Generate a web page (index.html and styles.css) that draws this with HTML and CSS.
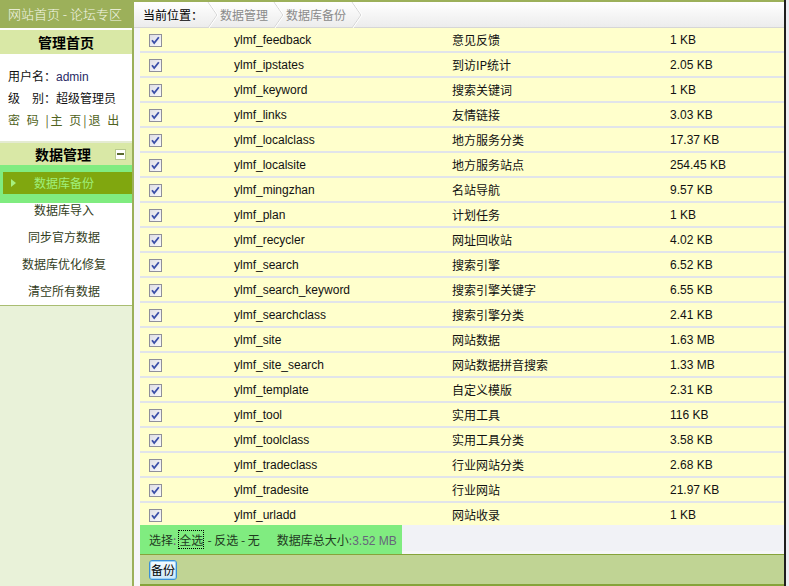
FILE: index.html
```html
<!DOCTYPE html>
<html>
<head>
<meta charset="utf-8">
<link rel="stylesheet" href="styles.css">
</head>
<body>
<div class="frame">
  <aside class="sidebar">
    <div class="logo-bar">网站首页 - 论坛专区</div>
    <div class="side-body">
      <div class="side-top">
        <div class="side-title">管理首页</div>
        <div class="user-info">
          <div class="line">用户名：<span class="uname">admin</span></div>
          <div class="line">级&emsp;别：超级管理员</div>
          <div class="line links">密&nbsp;码&nbsp;|主&nbsp;页|退&nbsp;出</div>
        </div>
        <div class="menu-head">
          <span class="menu-title">数据管理</span>
          <span class="toggle"><span class="minus"></span></span>
        </div>
        <ul class="menu">
          <li class="menu-item active"><span class="active-inner"><span class="tri"></span><span class="label">数据库备份</span></span></li>
          <li class="menu-item">数据库导入</li>
          <li class="menu-item">同步官方数据</li>
          <li class="menu-item">数据库优化修复</li>
          <li class="menu-item">清空所有数据</li>
        </ul>
      </div>
      <div class="side-rest"></div>
    </div>
  </aside>
  <main class="main">
    <div class="crumbs">
      <span class="crumb-here">当前位置：</span>
      <svg class="chev" width="12" height="26" viewBox="0 0 12 26"><polyline points="1,0 10,13 1,26" fill="none" stroke="#d4d4d4" stroke-width="1"/><polyline points="2,0 11,13 2,26" fill="none" stroke="#ffffff" stroke-width="1"/></svg>
      <span class="crumb">数据管理</span>
      <svg class="chev" width="12" height="26" viewBox="0 0 12 26"><polyline points="1,0 10,13 1,26" fill="none" stroke="#d4d4d4" stroke-width="1"/><polyline points="2,0 11,13 2,26" fill="none" stroke="#ffffff" stroke-width="1"/></svg>
      <span class="crumb">数据库备份</span>
      <svg class="chev" width="12" height="26" viewBox="0 0 12 26"><polyline points="1,0 10,13 1,26" fill="none" stroke="#d4d4d4" stroke-width="1"/><polyline points="2,0 11,13 2,26" fill="none" stroke="#ffffff" stroke-width="1"/></svg>
    </div>
    <div class="content">
      <div class="table" id="rows"></div>
      <div class="foot-row">
        <div class="select-bar">
          <span class="sel-label">选择<span class="colon">:</span></span>
          <span class="sel-all">全选</span>
          <span>- 反选 - 无</span>
          <span class="total">数据库总大小<span class="colon">:</span><span class="total-num">3.52 MB</span></span>
        </div>
      </div>
    </div>
    <div class="action-bar">
      <button class="btn">备份</button>
    </div>
  </main>
</div>
<script>
var data = [
  ["ylmf_feedback","意见反馈","1 KB"],
  ["ylmf_ipstates","到访IP统计","2.05 KB"],
  ["ylmf_keyword","搜索关键词","1 KB"],
  ["ylmf_links","友情链接","3.03 KB"],
  ["ylmf_localclass","地方服务分类","17.37 KB"],
  ["ylmf_localsite","地方服务站点","254.45 KB"],
  ["ylmf_mingzhan","名站导航","9.57 KB"],
  ["ylmf_plan","计划任务","1 KB"],
  ["ylmf_recycler","网址回收站","4.02 KB"],
  ["ylmf_search","搜索引擎","6.52 KB"],
  ["ylmf_search_keyword","搜索引擎关键字","6.55 KB"],
  ["ylmf_searchclass","搜索引擎分类","2.41 KB"],
  ["ylmf_site","网站数据","1.63 MB"],
  ["ylmf_site_search","网站数据拼音搜索","1.33 MB"],
  ["ylmf_template","自定义模版","2.31 KB"],
  ["ylmf_tool","实用工具","116 KB"],
  ["ylmf_toolclass","实用工具分类","3.58 KB"],
  ["ylmf_tradeclass","行业网站分类","2.68 KB"],
  ["ylmf_tradesite","行业网站","21.97 KB"],
  ["ylmf_urladd","网站收录","1 KB"]
];
var cb = '<svg class="cb" width="13" height="13" viewBox="0 0 13 13"><defs><linearGradient id="g" x1="0" y1="0" x2="1" y2="1"><stop offset="0" stop-color="#dcdce4"/><stop offset="1" stop-color="#fbfbfd"/></linearGradient></defs><rect x="0.5" y="0.5" width="12" height="12" fill="url(#g)" stroke="#8f8f9a"/><path d="M3 6.2 L5.2 9 L9.8 3.2" fill="none" stroke="#3a4ea8" stroke-width="1.8"/></svg>';
var html = "";
data.forEach(function (r) {
  html += '<div class="row"><div class="c-check">' + cb + '</div><div class="c-name">' + r[0] + '</div><div class="c-desc">' + r[1] + '</div><div class="c-size">' + r[2] + '</div></div>';
});
document.getElementById("rows").innerHTML = html;
</script>
</body>
</html>
```
FILE: styles.css
```css
* { box-sizing: border-box; }
html, body { margin: 0; padding: 0; }
body {
  width: 789px;
  height: 586px;
  overflow: hidden;
  background: #ecedf3;
  font-family: "Liberation Sans", "Noto Sans CJK SC", sans-serif;
  font-size: 12px;
  color: #111;
}
.frame {
  display: flex;
  width: 786px;
  height: 586px;
}
.sidebar {
  width: 134px;
  flex: none;
  display: flex;
  flex-direction: column;
}
.logo-bar {
  height: 28px;
  background: #9cb05a;
  color: #f4f7e8;
  font-family: "Noto Sans CJK SC", sans-serif;
  font-size: 13px;
  font-weight: 300;
  line-height: 28px;
  padding-left: 8px;
  white-space: nowrap;
}
.side-body {
  flex: 1;
  display: flex;
  flex-direction: column;
  border-right: 2px solid #9cb05a;
  overflow: hidden;
}
.side-top {
  background: #fff;
  padding-top: 2px;
  border-bottom: 1px solid #a9bd72;
}
.side-title {
  height: 24px;
  background: #d9e8a6;
  font-family: "Noto Sans CJK SC", sans-serif;
  font-weight: bold;
  font-size: 14px;
  line-height: 24px;
  text-align: center;
  color: #000;
}
.user-info {
  padding: 11px 0 0 8px;
  font-family: "Noto Sans CJK SC", sans-serif;
  font-size: 12px;
}
.user-info .line {
  height: 22px;
  line-height: 22px;
  color: #111;
  white-space: nowrap;
}
.uname {
  font-family: "Liberation Sans", sans-serif;
  color: #2a2a66;
}
.user-info .links {
  color: #4f6220;
  letter-spacing: 2px;
}
.menu-head {
  margin-top: 10px;
  border-top: 2px solid #e4ebd2;
  height: 24px;
  background: #d9e8a6;
  display: flex;
  align-items: center;
  padding-left: 35px;
}
.menu-title {
  font-family: "Noto Sans CJK SC", sans-serif;
  font-weight: bold;
  font-size: 14px;
  line-height: 20px;
  color: #000;
}
.toggle {
  margin-left: 24px;
  width: 11px;
  height: 11px;
  background: #fff;
  border: 1px solid #b9c98e;
  display: flex;
  align-items: center;
  justify-content: center;
}
.minus {
  width: 7px;
  height: 2px;
  background: #5a6a30;
}
.menu {
  list-style: none;
  margin: 0;
  padding: 0 0 1px;
}
.menu-item {
  height: 27px;
  line-height: 27px;
  text-align: center;
  font-family: "Noto Sans CJK SC", sans-serif;
  font-size: 12px;
  color: #333d22;
  padding-right: 4px;
}
.menu-item.active {
  height: 38px;
  background: #80ec80;
  padding: 7px 0 9px 3px;
  margin-bottom: -7px;
  line-height: 22px;
}
.active-inner {
  display: flex;
  align-items: center;
  height: 22px;
  background: #80a70f;
  color: #9ff07c;
  padding-left: 8px;
}
.tri {
  width: 0;
  height: 0;
  border-left: 5px solid #a6f07e;
  border-top: 4px solid transparent;
  border-bottom: 4px solid transparent;
}
.active-inner .label {
  margin-left: 18px;
}
.side-rest {
  flex: 1;
  background: #e9f2d9;
}
.main {
  flex: 1;
  display: flex;
  flex-direction: column;
  border-right: 2px solid #1e1e1e;
  background: #f6f6f8;
}
.crumbs {
  height: 28px;
  border-top: 2px solid #9cb05a;
  border-bottom: 1px solid #d6d6d6;
  background: linear-gradient(#ffffff, #ececec);
  display: flex;
  align-items: center;
  padding-left: 9px;
  font-family: "Noto Sans CJK SC", sans-serif;
  font-size: 12px;
}
.crumb-here {
  color: #000;
  font-size: 12px;
  margin-right: 4px;
}
.chev { flex: none; }
.crumb {
  color: #8a8a8a;
  margin: 0 5px 0 1px;
}
.content {
  padding-left: 6px;
  flex: 1;
}
.row {
  display: grid;
  grid-template-columns: 94px 218px 218px 1fr;
  height: 25px;
  padding-top: 1px;
  background: #ffffcc;
  border-bottom: 2px solid #e1e4ea;
  align-items: center;
}
.c-check {
  padding-left: 9px;
  display: flex;
  align-items: center;
}
.c-name, .c-size, .c-desc {
  font-size: 12px;
  line-height: 14px;
  height: 14px;
  color: #111;
  white-space: nowrap;
}
.c-name, .c-size {
  font-family: "Liberation Sans", sans-serif;
}
.c-desc {
  font-family: "Noto Sans CJK SC", sans-serif;
}
.foot-row {
  height: 26px;
  background: #f1f2f6;
}
.select-bar {
  width: 262px;
  height: 29px;
  margin-top: -3px;
  background: #80ec80;
  display: flex;
  align-items: center;
  padding-left: 9px;
  font-family: "Noto Sans CJK SC", sans-serif;
  font-size: 12px;
  color: #1f3a1f;
  white-space: nowrap;
  position: relative;
}
.colon { color: #7a5a7a; }
.sel-all {
  outline: 1px dotted #000;
  margin: 0 4px 0 3px;
}
.total {
  margin-left: 17px;
}
.total-num {
  font-family: "Liberation Sans", sans-serif;
  color: #66667a;
}
.action-bar {
  height: 32px;
  background: #c0d494;
  border-top: 1px solid #86a33a;
  border-bottom: 2px solid #86a33a;
  margin-left: 6px;
  padding: 5px 0 0 9px;
}
.btn {
  width: 28px;
  height: 20px;
  padding: 0;
  border: 1px solid #3b8fd6;
  border-radius: 3px;
  background: linear-gradient(#f4fbff, #cfe8f8);
  box-shadow: inset 0 0 0 1px #9fd4f6;
  font-family: "Noto Sans CJK SC", sans-serif;
  font-size: 12px;
  line-height: 16px;
  color: #000;
}
```
